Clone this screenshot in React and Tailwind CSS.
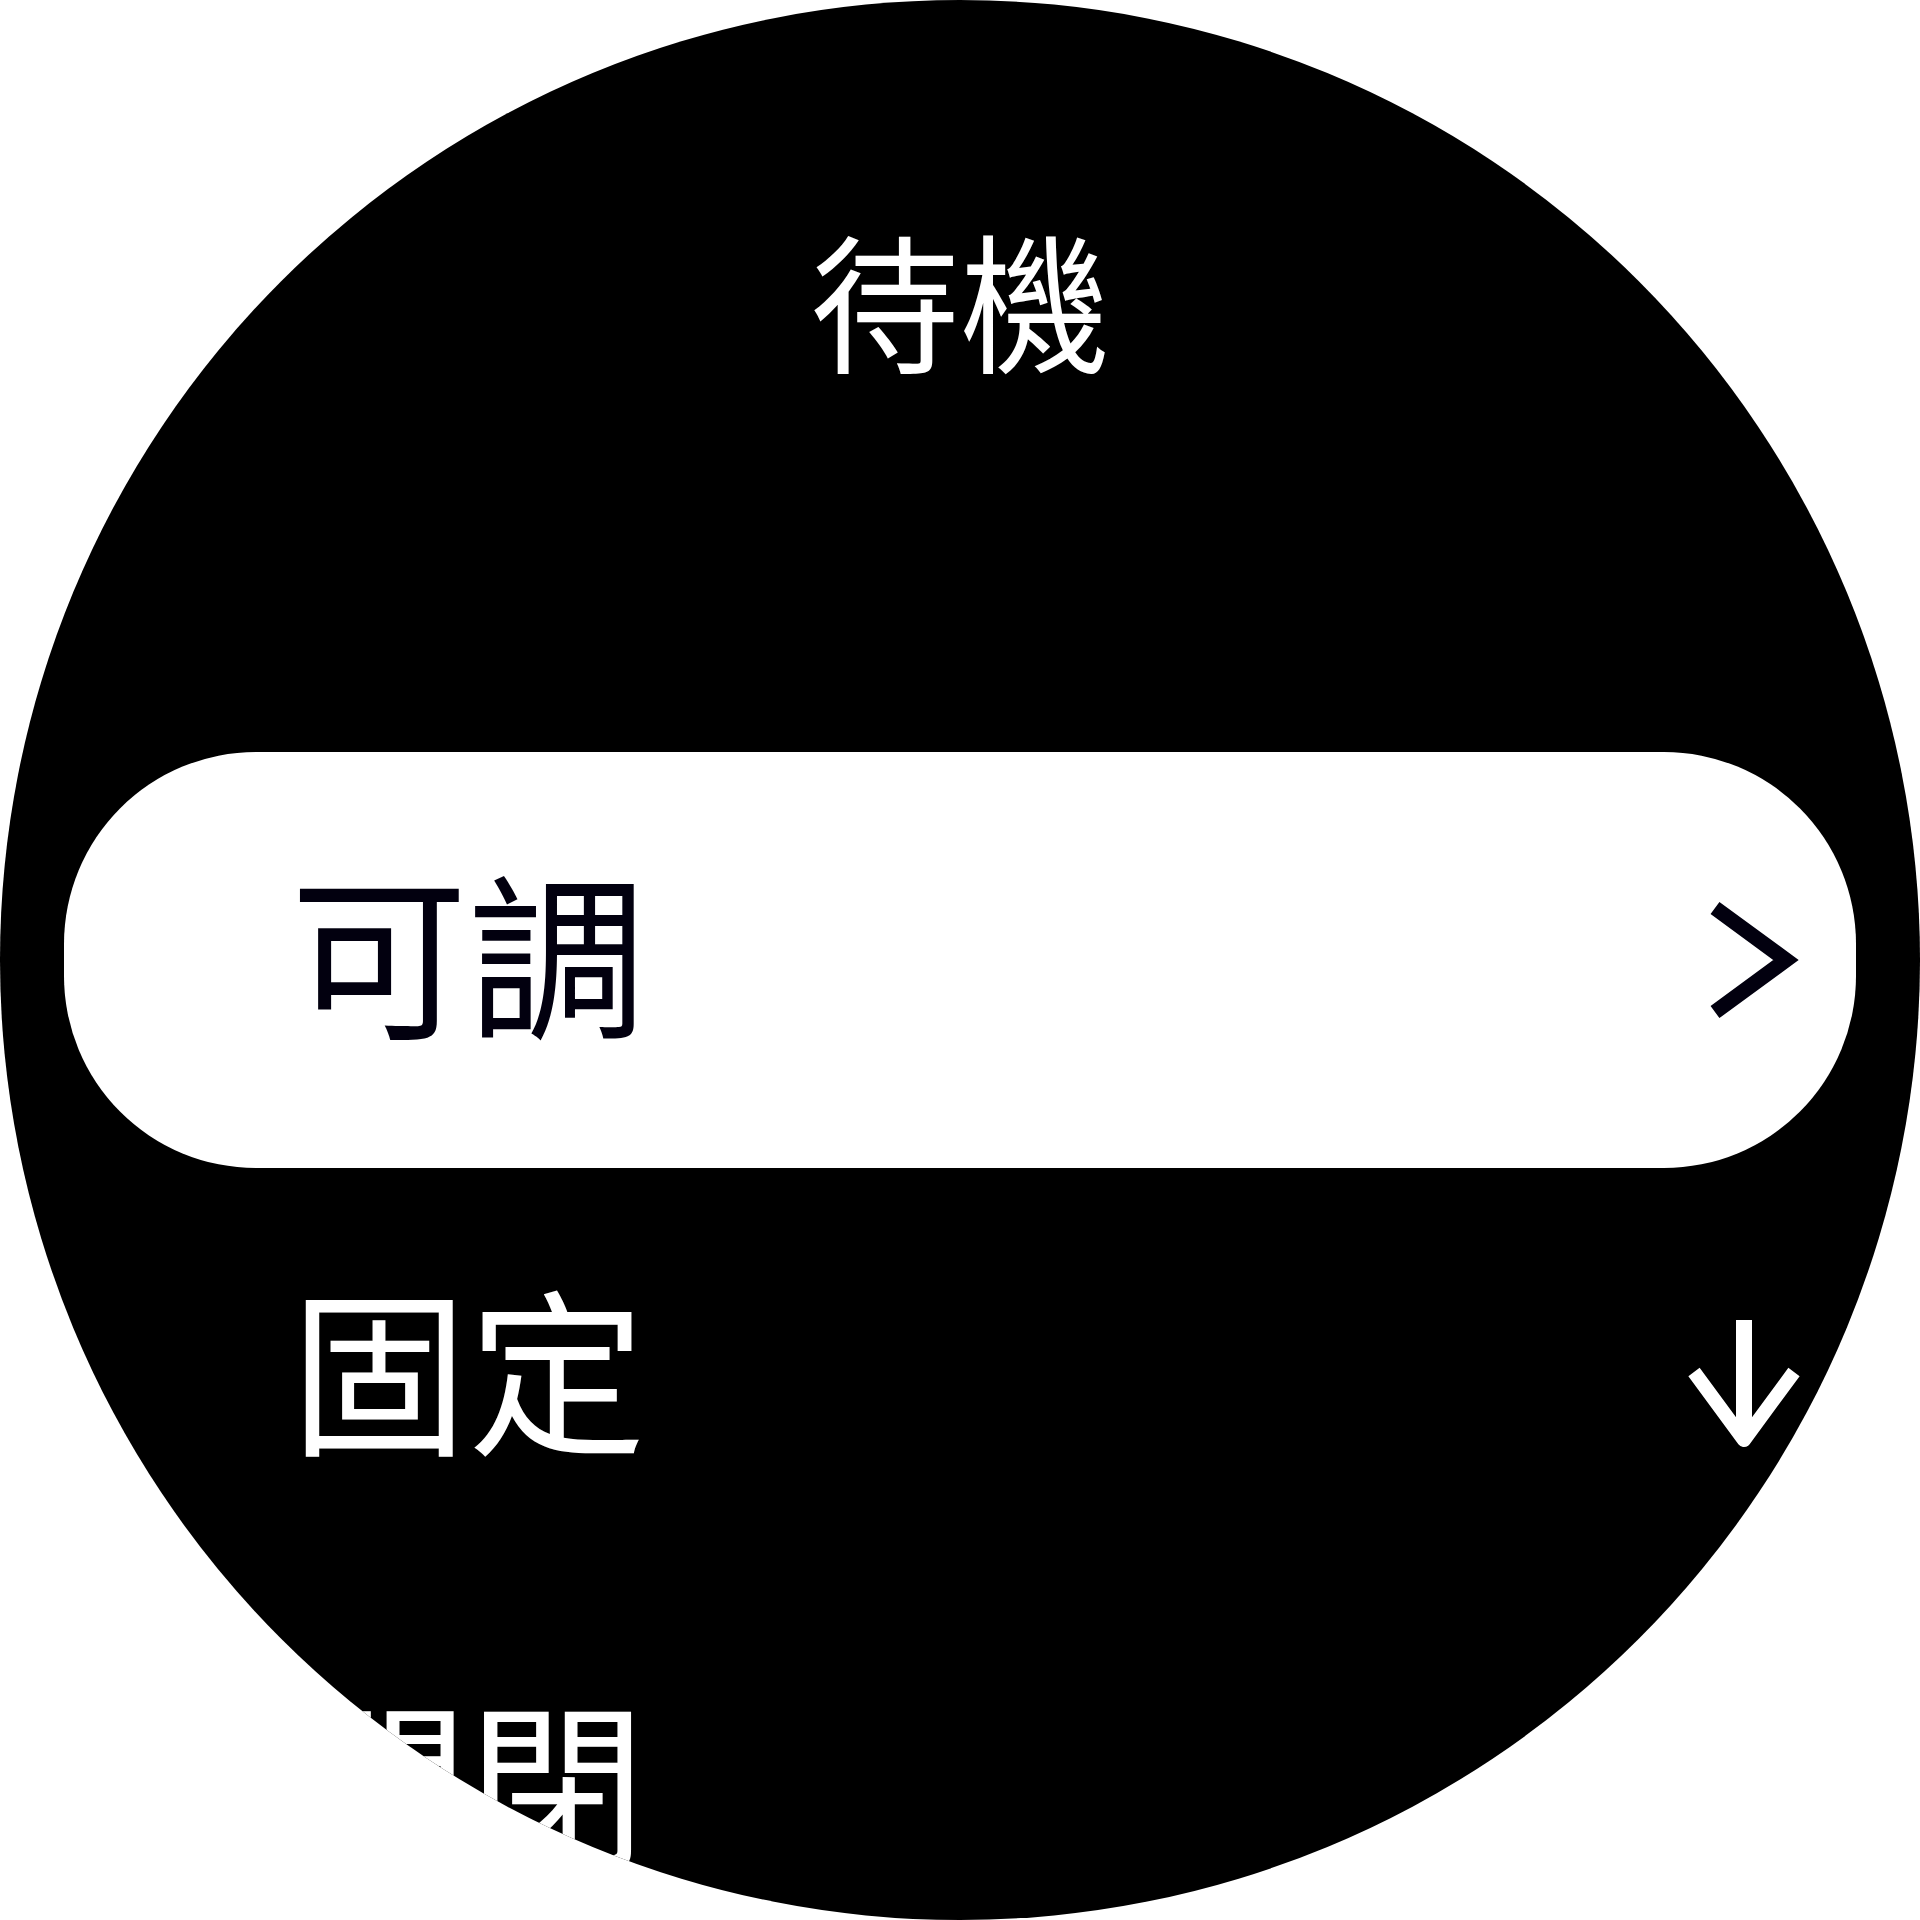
export default function App() {
  const font = { fontFamily: '"Noto Sans CJK TC", "Noto Sans CJK SC", sans-serif' };
  return (
    <div className="w-[1920px] h-[1920px] bg-white" style={font}>
      <div className="w-[1920px] h-[1920px] rounded-full bg-black overflow-hidden flex flex-col">
        <div className="h-[752px] shrink-0 flex justify-center pt-[222px]">
          <div className="text-[150px] leading-none text-white">待機</div>
        </div>
        <div className="h-[416px] shrink-0 mx-[64px] bg-white rounded-[192px] flex items-center justify-between pl-[226px] pr-[56px]">
          <div className="text-[178px] leading-none text-[#02000f] pb-[22px]">可調</div>
          <svg width="112" height="128" viewBox="0 0 112 128" className="block">
            <path d="M27 12 L98 64 L27 116" fill="none" stroke="#02000f" strokeWidth="15" />
          </svg>
        </div>
        <div className="h-[416px] shrink-0 mx-[64px] flex items-center justify-between pl-[226px] pr-[56px]">
          <div className="text-[178px] leading-none text-white pb-[22px]">固定</div>
          <svg width="112" height="128" viewBox="0 0 112 128" className="block mt-[16px]">
            <path d="M56 0 L56 112" fill="none" stroke="#ffffff" strokeWidth="16" />
            <path d="M6 52 L56 120 L106 52" fill="none" stroke="#ffffff" strokeWidth="14" strokeLinejoin="round" />
          </svg>
        </div>
        <div className="h-[416px] shrink-0 mx-[64px] flex items-center pl-[226px] pr-[56px]">
          <div className="text-[178px] leading-none text-white pb-[30px]">關閉</div>
        </div>
      </div>
    </div>
  );
}
